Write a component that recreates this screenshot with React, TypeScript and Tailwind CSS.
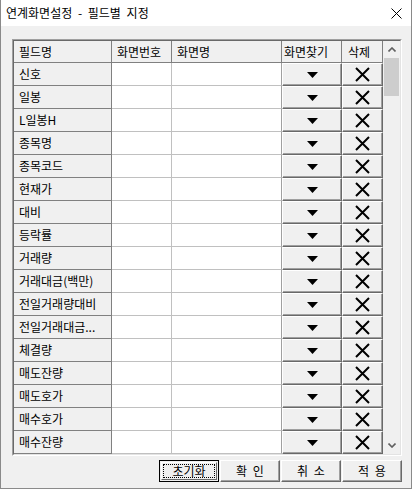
import React from "react";

const rows = [
  "신호",
  "일봉",
  "L일봉H",
  "종목명",
  "종목코드",
  "현재가",
  "대비",
  "등락률",
  "거래량",
  "거래대금(백만)",
  "전일거래량대비",
  "전일거래대금...",
  "체결량",
  "매도잔량",
  "매도호가",
  "매수호가",
  "매수잔량",
];

const font = {
  fontFamily: '"Noto Sans CJK KR", "Noto Sans", sans-serif',
};

function DownTri() {
  return (
    <svg width="11" height="6" viewBox="0 0 11 6">
      <path d="M0 0 H11 L5.5 6 Z" fill="#000" />
    </svg>
  );
}

function XIcon() {
  return (
    <svg width="15" height="15" viewBox="0 0 15 15">
      <path d="M1 1 L14 14 M14 1 L1 14" stroke="#000" strokeWidth="2" />
    </svg>
  );
}

function RaisedCell({ children }: { children: React.ReactNode }) {
  return (
    <div className="h-[23px] bg-[#f0f0f0] border-t border-l border-white border-r border-b border-r-[#696969] border-b-[#696969] shadow-[inset_-1px_-1px_0_#a0a0a0] flex items-center justify-center">
      {children}
    </div>
  );
}

export default function App() {
  return (
    <div
      className="w-[412px] h-[489px] bg-[#f0f0f0] flex flex-col text-[12px] [word-spacing:3px] text-black border-l border-r border-b border-[#8a8a8a]"
      style={font}
    >
      <div className="h-[26px] bg-white flex items-center justify-between pl-[5px] pr-[9px] shrink-0">
        <span className="text-[12px] leading-none">연계화면설정 - 필드별 지정</span>
        <svg width="11" height="11" viewBox="0 0 11 11">
          <path d="M0.5 0.5 L10.5 10.5 M10.5 0.5 L0.5 10.5" stroke="#000" strokeWidth="1" />
        </svg>
      </div>

      <div className="pl-[11px] pt-[13px] flex flex-col">
        <div className="w-[390px] border-t border-l border-[#a0a0a0] border-r border-b border-r-white border-b-white">
          <div className="h-[415px] border-t border-l border-[#696969] border-r border-b border-r-[#e3e3e3] border-b-[#e3e3e3] flex bg-[#f0f0f0]">
            <div className="w-[369px] flex flex-col">
              <div className="grid grid-cols-[98px_60px_110px_60px_41px] h-[23px]">
                <div className="bg-[#f0f0f0] border-r border-b border-[#808080] pl-[5px] flex items-center">필드명</div>
                <div className="bg-[#f0f0f0] border-r border-b border-[#808080] pl-[5px] flex items-center">화면번호</div>
                <div className="bg-[#f0f0f0] border-r border-b border-[#808080] pl-[5px] flex items-center">화면명</div>
                <div className="bg-[#f0f0f0] border-r border-b border-[#808080] pl-[2px] flex items-center">화면찾기</div>
                <div className="bg-[#f0f0f0] border-r border-b border-[#808080] pl-[6px] flex items-center">삭제</div>
              </div>
              {rows.map((r) => (
                <div key={r} className="grid grid-cols-[98px_60px_110px_60px_41px] h-[23px]">
                  <div className="bg-[#f0f0f0] border-r border-b border-[#808080] pl-[5px] flex items-center whitespace-nowrap overflow-hidden">
                    {r}
                  </div>
                  <div className="bg-white border-r border-b border-[#c0c0c0]" />
                  <div className="bg-white border-r border-b border-[#c0c0c0] border-r-[#a0a0a0]" />
                  <RaisedCell>
                    <DownTri />
                  </RaisedCell>
                  <RaisedCell>
                    <XIcon />
                  </RaisedCell>
                </div>
              ))}
            </div>
            <div className="w-[17px] flex flex-col bg-[#f0f0f0]">
              <div className="h-[17px] flex items-center justify-center">
                <svg width="8" height="5" viewBox="0 0 8 5">
                  <path d="M0.5 4.5 L4 1 L7.5 4.5" stroke="#606060" strokeWidth="1.6" fill="none" />
                </svg>
              </div>
              <div className="h-[38px] mx-[1px] bg-[#cdcdcd]" />
              <div className="flex-1" />
              <div className="h-[17px] flex items-center justify-center">
                <svg width="8" height="5" viewBox="0 0 8 5">
                  <path d="M0.5 0.5 L4 4 L7.5 0.5" stroke="#606060" strokeWidth="1.6" fill="none" />
                </svg>
              </div>
            </div>
          </div>
        </div>

        <div className="flex justify-end gap-[1px] mt-[4px] w-[390px]">
          <div className="w-[60px] h-[22px] border border-black bg-[#f0f0f0] p-[1px]">
            <div className="h-full border-t border-l border-white border-r border-b border-r-[#696969] border-b-[#696969] flex items-center justify-center p-[1px]">
              <div className="w-full h-full border border-dotted border-black flex items-center justify-center">
                초기화
              </div>
            </div>
          </div>
          {["확 인", "취 소", "적 용"].map((b) => (
            <div
              key={b}
              className="w-[60px] h-[22px] bg-[#f0f0f0] border-t border-l border-white border-r border-b border-r-[#696969] border-b-[#696969] shadow-[inset_-1px_-1px_0_#a0a0a0] flex items-center justify-center whitespace-pre"
            >
              {b}
            </div>
          ))}
        </div>
      </div>
    </div>
  );
}
